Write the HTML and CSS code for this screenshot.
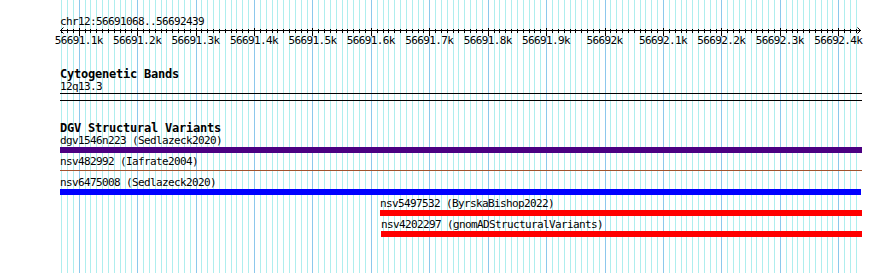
FILE: index.html
```html
<!DOCTYPE html>
<html lang="en">
<head>
    <meta charset="UTF-8">
    <meta name="viewport" content="width=device-width, initial-scale=1.0">
    <title>chr12:56691068..56692439</title>
    <link rel="stylesheet" href="styles.css">
</head>
<body>
    <div class="panel">
        <!-- ruler -->
        <div class="ruler">
            <div class="ref">chr12:56691068..56692439</div>
            <div class="axis">
                <svg width="802" height="8" viewBox="0 0 802 8">
                    <path d="M0 2.5H801" stroke="#000" stroke-width="1" fill="none"/>
                    <polyline points="3.5,-0.5 0.5,2.5 3.5,5.5" stroke="#000" stroke-width="1" fill="none"/>
                    <polyline points="797.5,-0.5 800.5,2.5 797.5,5.5" stroke="#000" stroke-width="1" fill="none"/>
                </svg>
            </div>
            <div class="labels">
                <span>56691.1k</span>
                <span>56691.2k</span>
                <span>56691.3k</span>
                <span>56691.4k</span>
                <span>56691.5k</span>
                <span>56691.6k</span>
                <span>56691.7k</span>
                <span>56691.8k</span>
                <span>56691.9k</span>
                <span>56692k</span>
                <span>56692.1k</span>
                <span>56692.2k</span>
                <span>56692.3k</span>
                <span>56692.4k</span>
            </div>
        </div>

        <div class="track cyto">
            <div class="track-title">Cytogenetic Bands</div>
            <div class="feature-label">12q13.3</div>
            <div class="band"></div>
        </div>

        <div class="separator"></div>

        <div class="track dgv">
            <div class="track-title">DGV Structural Variants</div>

            <div class="feature" style="margin-left: 0; width: 802px;">
                <div class="feature-label">dgv1546n223 (Sedlazeck2020)</div>
                <div class="bar purple"></div>
            </div>

            <div class="feature" style="margin-left: 0; width: 802px;">
                <div class="feature-label">nsv482992 (Iafrate2004)</div>
                <div class="bar thin"></div>
            </div>

            <div class="feature" style="margin-left: 0; width: 801px;">
                <div class="feature-label">nsv6475008 (Sedlazeck2020)</div>
                <div class="bar blue"></div>
            </div>

            <div class="feature" style="margin-left: 320px; width: 482px;">
                <div class="feature-label">nsv5497532 (ByrskaBishop2022)</div>
                <div class="bar red"></div>
            </div>

            <div class="feature" style="margin-left: 321px; width: 481px;">
                <div class="feature-label">nsv4202297 (gnomADStructuralVariants)</div>
                <div class="bar red"></div>
            </div>
        </div>
    </div>
</body>
</html>
```

FILE: styles.css
```css
* {
    margin: 0;
    padding: 0;
    box-sizing: border-box;
}

body {
    background-color: white;
    font-family: 'DejaVu Sans Mono', 'Liberation Mono', monospace;
    font-size: 11px;
    letter-spacing: -0.62px;
    color: #000;
}

.panel {
    margin-left: 60px;
    width: 802px;
    height: 273px;
    background-image:
        repeating-linear-gradient(to right, transparent 0 18.7px, #8cc8ec 18.7px 19.7px, transparent 19.7px 58.43px),
        repeating-linear-gradient(to right, transparent 0 1.17px, #aeeeee 1.17px 2.17px, transparent 2.17px 5.843px);
}

.ruler {
    padding-top: 16px;
}

.ref {
    line-height: 12px;
    white-space: nowrap;
}

.axis {
    height: 8px;
    background-image:
        repeating-linear-gradient(to right, transparent 0 18.7px, #000 18.7px 19.7px, transparent 19.7px 58.43px),
        repeating-linear-gradient(to right, transparent 0 1.17px, #000 1.17px 2.17px, transparent 2.17px 5.843px);
    background-size: 100% 8px, 100% 4px;
    background-position: 0 0, 0 1px;
    background-repeat: no-repeat;
}

.axis svg {
    display: block;
    overflow: visible;
}

.labels {
    display: flex;
    margin-left: -10.5px;
    line-height: 9px;
    white-space: nowrap;
}

.labels span {
    flex: 0 0 58.43px;
    text-align: center;
}

.track {
    margin-top: 20px;
}

.cyto {
    margin-top: 22px;
}

.track-title {
    font-weight: bold;
    font-size: 12px;
    letter-spacing: -0.22px;
    line-height: 14px;
    white-space: nowrap;
}

.feature-label {
    line-height: 12px;
    white-space: nowrap;
}

.band {
    height: 1px;
    background-color: #000;
}

.separator {
    margin-top: 6px;
    height: 1px;
    background-color: #000;
}

.feature {
    margin-bottom: 3px;
}

.bar {
    height: 6px;
}

.bar.purple {
    background-color: #4b0082;
}

.bar.blue {
    background-color: #0000ff;
}

.bar.red {
    background-color: #ff0000;
}

.bar.thin {
    background: linear-gradient(#a0522d, #a0522d) 0 2px / 100% 1px no-repeat;
}
```
